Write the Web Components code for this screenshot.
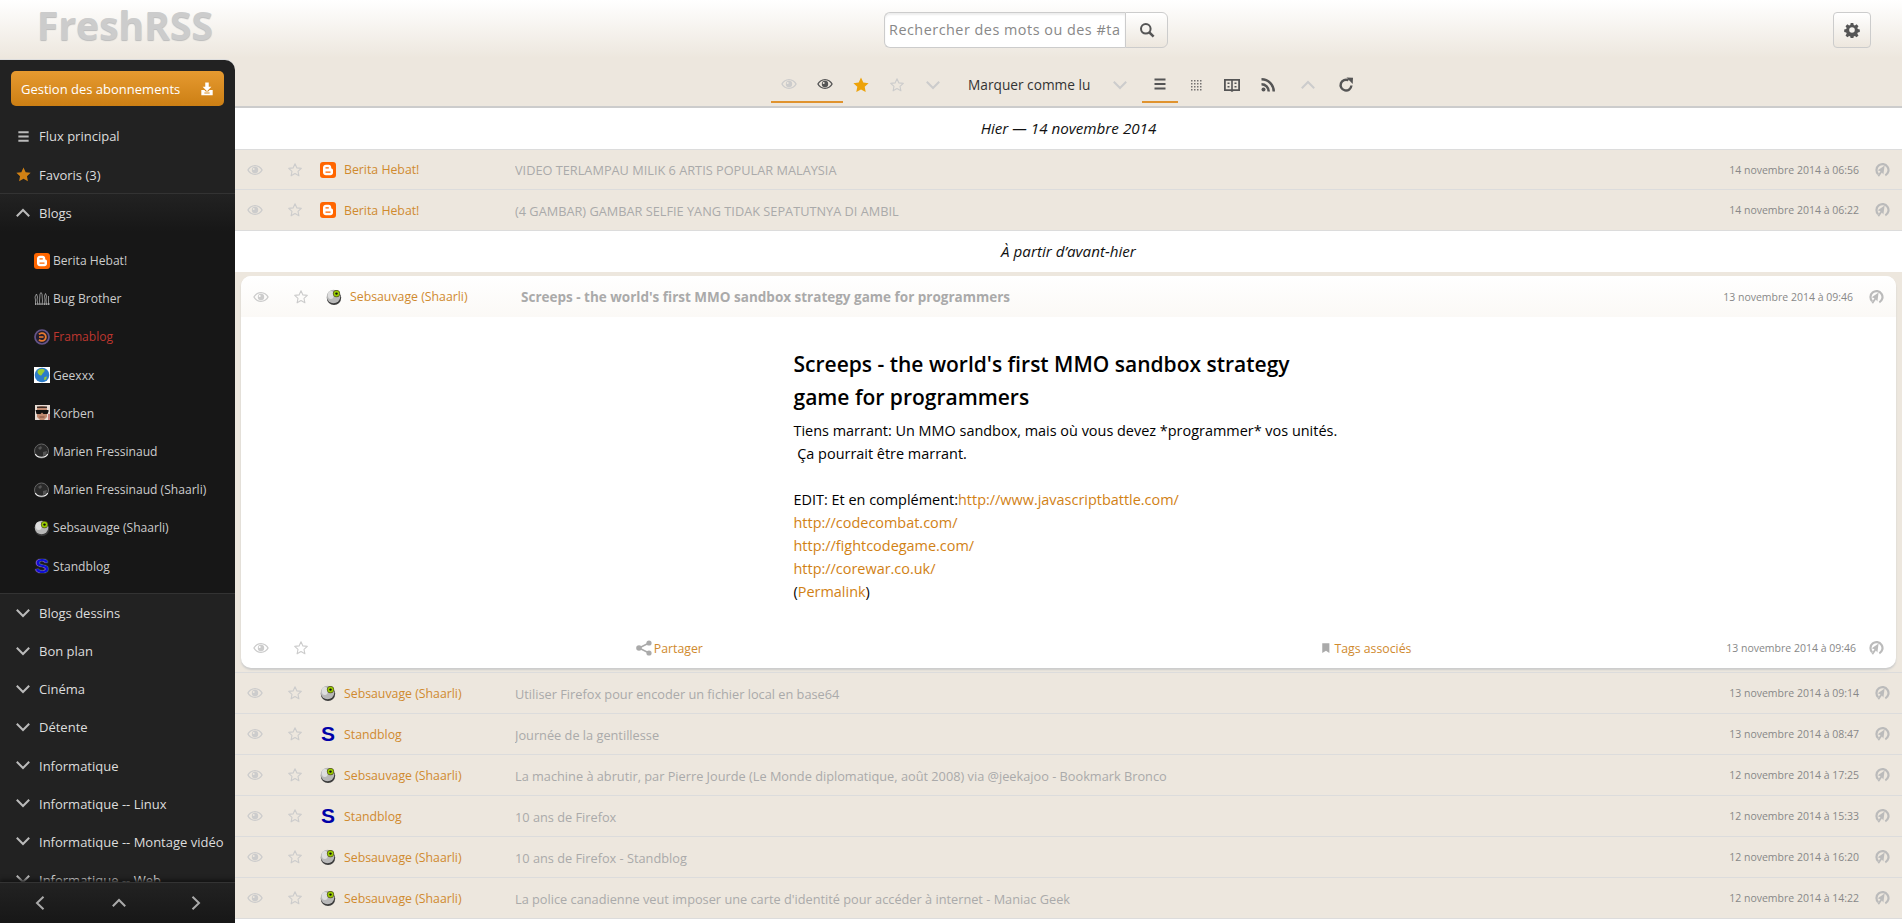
<!DOCTYPE html>
<html lang="fr">
<head>
<meta charset="utf-8">
<title>FreshRSS</title>
<style>
  html, body { margin: 0; height: 100%; overflow: hidden; }
  body { font-family: "Open Sans", "Liberation Sans", sans-serif; background: #fff; }
</style>
</head>
<body>
<fr-header></fr-header>
<fr-layout>
  <fr-sidebar slot="side">
    <fr-entry icon="list">Flux principal</fr-entry>
    <fr-entry icon="star-on">Favoris (3)</fr-entry>
    <fr-cat open>Blogs</fr-cat>
    <fr-feeds>
      <fr-feed icon="blogger">Berita Hebat!</fr-feed>
      <fr-feed icon="bug">Bug Brother</fr-feed>
      <fr-feed icon="frama" error>Framablog</fr-feed>
      <fr-feed icon="geexxx">Geexxx</fr-feed>
      <fr-feed icon="korben">Korben</fr-feed>
      <fr-feed icon="marien">Marien Fressinaud</fr-feed>
      <fr-feed icon="marien">Marien Fressinaud (Shaarli)</fr-feed>
      <fr-feed icon="seb">Sebsauvage (Shaarli)</fr-feed>
      <fr-feed icon="stand-dark">Standblog</fr-feed>
    </fr-feeds>
    <fr-cat>Blogs dessins</fr-cat>
    <fr-cat>Bon plan</fr-cat>
    <fr-cat>Cinéma</fr-cat>
    <fr-cat>Détente</fr-cat>
    <fr-cat>Informatique</fr-cat>
    <fr-cat>Informatique -- Linux</fr-cat>
    <fr-cat>Informatique -- Montage vidéo</fr-cat>
    <fr-cat>Informatique -- Web</fr-cat>
  </fr-sidebar>

  <fr-toolbar></fr-toolbar>
  <fr-date>Hier — 14 novembre 2014</fr-date>
  <fr-row first icon="blogger" feed="Berita Hebat!" date="14 novembre 2014 à 06:56">VIDEO TERLAMPAU MILIK 6 ARTIS POPULAR MALAYSIA</fr-row>
  <fr-row icon="blogger" feed="Berita Hebat!" date="14 novembre 2014 à 06:22">(4 GAMBAR) GAMBAR SELFIE YANG TIDAK SEPATUTNYA DI AMBIL</fr-row>
  <fr-date>À partir d’avant-hier</fr-date>
  <fr-card icon="seb" feed="Sebsauvage (Shaarli)" date="13 novembre 2014 à 09:46" heading="Screeps - the world's first MMO sandbox strategy game for programmers">
    Tiens marrant: Un MMO sandbox, mais où vous devez *programmer* vos unités.<br>
    &nbsp;Ça pourrait être marrant.<br>
    <br>
    EDIT: Et en complément:<a>http://www.javascriptbattle.com/</a><br>
    <a>http://codecombat.com/</a><br>
    <a>http://fightcodegame.com/</a><br>
    <a>http://corewar.co.uk/</a><br>
    (<a>Permalink</a>)
  </fr-card>
  <fr-row icon="seb" feed="Sebsauvage (Shaarli)" date="13 novembre 2014 à 09:14">Utiliser Firefox pour encoder un fichier local en base64</fr-row>
  <fr-row icon="stand" feed="Standblog" date="13 novembre 2014 à 08:47">Journée de la gentillesse</fr-row>
  <fr-row icon="seb" feed="Sebsauvage (Shaarli)" date="12 novembre 2014 à 17:25">La machine à abrutir, par Pierre Jourde (Le Monde diplomatique, août 2008) via @jeekajoo - Bookmark Bronco</fr-row>
  <fr-row icon="stand" feed="Standblog" date="12 novembre 2014 à 15:33">10 ans de Firefox</fr-row>
  <fr-row icon="seb" feed="Sebsauvage (Shaarli)" date="12 novembre 2014 à 16:20">10 ans de Firefox - Standblog</fr-row>
  <fr-row icon="seb" feed="Sebsauvage (Shaarli)" date="12 novembre 2014 à 14:22">La police canadienne veut imposer une carte d'identité pour accéder à internet - Maniac Geek</fr-row>
</fr-layout>

<script>
// all the little 16x16 icons, they take their colour from currentColor
const ICONS = {
  eye: '<path fill-rule="evenodd" d="M8 3C4.4 3 1.6 5.3.2 8c1.4 2.7 4.2 5 7.8 5s6.400-2.300 7.800-5C14.400 5.300 11.600 3 8 3zm0 1.300c2.800 0 5 1.600 6.300 3.700-1.300 2.100-3.500 3.700-6.300 3.700S3 10.100 1.700 8C3 5.900 5.200 4.300 8 4.300z"/><path fill-rule="evenodd" d="M8 4.800a3.200 3.200 0 1 0 0 6.400 3.200 3.200 0 0 0 0-6.400zM6.700 6a1 1 0 1 1 0 2 1 1 0 0 1 0-2z"/>',
  'star-on': '<path d="M8 .6l2.300 4.900 5.300.7-3.900 3.600 1 5.300L8 12.500l-4.700 2.600 1-5.300L.4 6.200l5.300-.7z"/>',
  'star-off': '<path fill="none" stroke="currentColor" stroke-width="1.100" stroke-linejoin="round" d="M8 1.800l1.900 4.100 4.400.5-3.300 3 .9 4.400L8 11.600l-3.900 2.200.9-4.400-3.300-3 4.400-.5z"/>',
  down: '<path fill="none" stroke="currentColor" stroke-width="2" d="M1.800 4.800L8 11l6.200-6.200"/>',
  up: '<path fill="none" stroke="currentColor" stroke-width="2" d="M1.800 11.200L8 5l6.200 6.200"/>',
  left: '<path fill="none" stroke="currentColor" stroke-width="2" d="M11.500 1.800L5 8l6.500 6.200"/>',
  right: '<path fill="none" stroke="currentColor" stroke-width="2" d="M4.500 1.800L11 8l-6.500 6.200"/>',
  list: '<path d="M2.500 2.500h11v2h-11zM2.500 7h11v2h-11zM2.500 11.500h11v2h-11z"/>',
  grid: '<path opacity=".8" d="M3 3h1.500v1.500H3zM6 3h1.500v1.500H6zM9 3h1.500v1.500H9zM12 3h1.500v1.500H12zM3 6h1.500v1.500H3zM6 6h1.500v1.500H6zM9 6h1.500v1.500H9zM12 6h1.500v1.500H12zM3 9h1.500v1.500H3zM6 9h1.500v1.500H6zM9 9h1.500v1.500H9zM12 9h1.500v1.500H12zM3 12h1.500v1.500H3zM6 12h1.500v1.500H6zM9 12h1.500v1.500H9zM12 12h1.500v1.500H12z"/>',
  reader: '<path fill-rule="evenodd" d="M0 2h16v12H9.500L8 15l-1.500-1H0zm1.800 1.700v8.600h5.400V3.700zm7 0v8.600h5.400V3.700z"/><path d="M3.500 5.500h2V7h-2zM3.500 9h2v1.500h-2zM10.500 5.500h2V7h-2zM10.500 9h2v1.500h-2z"/>',
  rss: '<circle cx="3.500" cy="12.500" r="2"/><path d="M1.500 6v2.500a6 6 0 0 1 6 6H10A8.500 8.500 0 0 0 1.500 6z"/><path d="M1.500 1v2.500a11 11 0 0 1 11 11H15A13.500 13.500 0 0 0 1.500 1z"/>',
  refresh: '<path fill="none" stroke="currentColor" stroke-width="2.400" d="M13.400 8.500A5.400 5.400 0 1 1 10.500 3.300"/><path d="M8.500.5l6.500.3-.3 6.200z"/>',
  search: '<path fill="none" stroke="currentColor" stroke-width="2" d="M6.800 2a4.800 4.800 0 1 0 0 9.600 4.800 4.800 0 0 0 0-9.600z"/><path fill="none" stroke="currentColor" stroke-width="2.600" d="M10.300 10.300l4.300 4.300"/>',
  gear: '<path fill-rule="evenodd" d="M6.700 1h2.600l.4 2 1.200.5 1.700-1.200 1.900 1.900-1.200 1.700.5 1.200 2 .4v2.600l-2 .4-.5 1.200 1.200 1.700-1.900 1.900-1.700-1.200-1.200.5-.4 2H6.700l-.4-2-1.200-.5-1.700 1.200-1.900-1.900 1.200-1.700-.5-1.200-2-.4V7.500l2-.4.500-1.200-1.200-1.700 1.900-1.900 1.700 1.200 1.200-.5zM8 5.200a2.800 2.800 0 1 0 0 5.600 2.800 2.800 0 0 0 0-5.600z"/>',
  share: '<circle cx="3" cy="8" r="2.800"/><circle cx="13" cy="3" r="2.600"/><circle cx="13" cy="13" r="2.600"/><path fill="none" stroke="currentColor" stroke-width="1.500" d="M3 8l10-5M3 8l10 5"/>',
  tag: '<path d="M3 1.500h9.500v13L8 11.500l-5 3z"/>',
  link: '<path fill="none" stroke="currentColor" stroke-width="2.200" d="M4.200 12.300A6 6 0 1 1 11.300 13.400"/><path d="M10.600 3.500L9.400 12.600 7.900 10.500 5 14.800 3.600 13.600l2.900-4.300-2.700-1z"/>',
  download: '<path d="M6 .5h4v5h3L8 10.500 3 5.500h3z"/><path fill-rule="evenodd" d="M1.500 9H5l1.500 1.800h3L11 9h3.500v6h-13zM5 12v1h6v-1z"/>'
};

const icon = (name, size = 16) =>
  `<svg width="${size}" height="${size}" viewBox="0 0 16 16" fill="currentColor" aria-hidden="true">${ICONS[name]}</svg>`;

// favicons of the feeds
const FAVICONS = {
  blogger: '<rect width="16" height="16" rx="3" fill="#f60"/><path fill="#fff" d="M6 2.800h2.700c1.500 0 2.500 1 2.500 2.400v1.400c1 0 1.800.6 1.800 1.600v2.500c0 1.500-1.100 2.500-2.600 2.500H6c-1.600 0-3-1.200-3-2.800V5.600c0-1.600 1.400-2.800 3-2.800z"/><path fill="#f60" d="M5.500 5.300h3.300v1.300H5.500zM5.500 9.400h5v1.300h-5z"/>',
  bug: '<path fill="none" stroke="#aaa" stroke-width=".8" d="M1.500 14V9L1 6l1.500-3L3.500 6 3 9l1 5M6 14l-.5-4L6 3l1-1.500L8 3l.5 7L8 14M10.500 14l.5-5-.5-4 1-2.500L12.500 5 12 9l.5 5M14.500 14V5"/><path fill="none" stroke="#ddd" stroke-width=".6" d="M1 13h15"/>',
  frama: '<circle cx="8" cy="8" r="7" fill="#231d2e" stroke="#645488" stroke-width="1.700"/><path fill="none" stroke="#e8792e" stroke-width="1.800" d="M5 5.400A3.900 3.900 0 1 1 5 10.600"/><path fill="#e8792e" d="M5 7.200h4.500v1.600H5z"/>',
  geexxx: '<rect width="16" height="16" fill="#fff"/><circle cx="8" cy="8" r="7.300" fill="#2c7cc8"/><path fill="#9c3" d="M5 2.500c2-1 5-.5 5.500.5s-.5 2-1.500 3-1 3-2.500 2.500S3.500 6 3.500 5 4 3 5 2.500zM10.500 10l2.500-.5-1 3-2 .5z"/>',
  korben: '<rect x="1" width="15" height="15" fill="#e8dcd4"/><path fill="#c08a70" d="M3 4c0-2 2-3 5-3s5 1 5 3v8l-3 3H6l-3-3z"/><path fill="#3a2a24" d="M3 1.500h10V3H3z"/><path fill="#111" d="M1.500 5h13v1.500l-1 2.500h-4L8 7.500 6.500 9h-4z"/><path fill="#7c4a3a" d="M5.500 11.500h5v1h-5z"/><path fill="#a02020" d="M14 9h2v6h-2z" opacity=".5"/>',
  marien: '<circle cx="7.500" cy="8" r="7" fill="#2a2a2a" stroke="#666" stroke-width="1"/><path fill="#555" d="M4 5l3-2 1 2-2 2zM9 9l4-1-1 4-3 1z"/><path fill="none" stroke="#eee" stroke-width="1.200" d="M1.300 11c2 4.300 10.400 4.300 12.400 0"/>',
  seb: '<circle cx="8" cy="8.800" r="7.200" fill="#3c3c3c"/><circle cx="7.500" cy="7.500" r="6.800" fill="#b8b8b8"/><ellipse cx="4.800" cy="6" rx="3" ry="4" fill="#dedede"/><circle cx="10.500" cy="4.600" r="3.600" fill="#55551c"/><circle cx="10.500" cy="4.600" r="2.900" fill="#9c0"/><circle cx="10.500" cy="4.600" r="1.200" fill="#111"/>',
};

class FrIcon extends HTMLElement {
  connectedCallback() {
    const size = this.getAttribute('size') || 16;
    this.attachShadow({mode: 'open'}).innerHTML = `
    <style>:host { display: inline-flex; align-items: center; justify-content: center; }</style>
    ${icon(this.getAttribute('name'), size)}`;
  }
}
customElements.define('fr-icon', FrIcon);

class FrFavicon extends HTMLElement {
  connectedCallback() {
    const name = this.getAttribute('name');
    const stand = name.indexOf('stand') === 0;
    this.attachShadow({mode: 'open'}).innerHTML = `
    <style>
      :host { display: inline-block; width: 16px; height: 16px; flex: none; position: relative; }
      svg { display: block; }
      span {
        display: block; width: 16px; text-align: center;
        font: bold 21px/16px "Liberation Sans", sans-serif; color: #0000a8;
      }
      span.dark { text-shadow: 0 0 1px #fff; color: #1010d0; }
    </style>
    ${stand
      ? `<span class="${name === 'stand-dark' ? 'dark' : ''}">S</span>`
      : `<svg width="16" height="16" viewBox="0 0 16 16" aria-hidden="true">${FAVICONS[name]}</svg>`}`;
  }
}
customElements.define('fr-favicon', FrFavicon);

class FrHeader extends HTMLElement {
  constructor() {
    super();
    this.attachShadow({mode: 'open'}).innerHTML = `
    <style>
      :host {
        display: flex; align-items: flex-start; height: 60px; box-sizing: border-box;
        padding: 12px 31px 0 0;
        background: linear-gradient(#fff 0, #ede7de 58px);
      }
      .logo {
        width: 884px; margin-top: -12px; padding-left: 37px; box-sizing: border-box;
        font-size: 39px; font-weight: 700; line-height: 50px; color: #ccc;
        text-shadow: 0 1px 1px #bbb;
      }
      .search { display: flex; height: 36px; }
      .input {
        width: 241px; box-sizing: border-box; height: 36px; padding: 0 3px 0 4px; overflow: hidden;
        border: 1px solid #ccc; border-right: 0; border-radius: 6px 0 0 6px;
        background: #fff; box-shadow: inset 0 2px 2px #eee;
        font-size: 14.4px; line-height: 34px; letter-spacing: .5px; color: #888; white-space: nowrap;
      }
      .btn {
        display: flex; align-items: center; justify-content: center; box-sizing: border-box; height: 36px;
        border: 1px solid #ccc; background: linear-gradient(#fff, #ede7de); color: #555;
      }
      .search .btn { width: 43px; border-radius: 0 6px 6px 0; }
      .gear { width: 38px; border-radius: 4px; margin-left: auto; }
    </style>
    <div class="logo">FreshRSS</div>
    <div class="search">
      <div class="input">Rechercher des mots ou des #ta</div>
      <div class="btn"><fr-icon name="search"></fr-icon></div>
    </div>
    <div class="btn gear"><fr-icon name="gear"></fr-icon></div>`;
  }
}
customElements.define('fr-header', FrHeader);

class FrLayout extends HTMLElement {
  constructor() {
    super();
    this.attachShadow({mode: 'open'}).innerHTML = `
    <style>
      :host { display: flex; height: 863px; background: #ede7de; }
      main { flex: 1; min-width: 0; overflow: hidden; background: #fff; }
    </style>
    <slot name="side"></slot>
    <main><slot></slot></main>`;
  }
}
customElements.define('fr-layout', FrLayout);

class FrSidebar extends HTMLElement {
  constructor() {
    super();
    this.attachShadow({mode: 'open'}).innerHTML = `
    <style>
      :host {
        display: flex; flex-direction: column; width: 235px; flex: none; height: 863px;
        background: #222; border-radius: 0 10px 0 0; overflow: hidden;
        box-shadow: 0 -1px 0 #ddd; color: #ccc;
      }
      .top { padding: 11px 11px 11px; }
      .manage {
        display: flex; align-items: center; justify-content: space-between; height: 35px;
        padding: 0 10px; box-sizing: border-box; border-radius: 5px;
        background: linear-gradient(#e69a30, #cc7f14); color: #fff; font-size: 13px;
      }
      .scroll { flex: 1; min-height: 0; overflow: hidden; }
      nav {
        display: flex; align-items: center; height: 41px; box-sizing: border-box; flex: none;
        border-top: 1px solid #333; box-shadow: 0 -2px 4px #111;
        background: linear-gradient(#222, #171717); color: #aaa; position: relative;
      }
      nav fr-icon { flex: 1; }
      nav fr-icon:first-child { flex: 1.03; }
    </style>
    <div class="top">
      <div class="manage">Gestion des abonnements <fr-icon name="download" size="14"></fr-icon></div>
    </div>
    <div class="scroll"><slot></slot></div>
    <nav>
      <fr-icon name="left"></fr-icon>
      <fr-icon name="up"></fr-icon>
      <fr-icon name="right"></fr-icon>
    </nav>`;
  }
}
customElements.define('fr-sidebar', FrSidebar);

class FrEntry extends HTMLElement {
  connectedCallback() {
    const name = this.getAttribute('icon');
    this.attachShadow({mode: 'open'}).innerHTML = `
    <style>
      :host {
        display: flex; align-items: center; height: 38.6px; padding-left: 15px;
        font-size: 13px; color: #ddd;
      }
      fr-icon { width: 16px; margin-right: 8px; color: ${name === 'star-on' ? '#d18114' : '#bbb'}; }
    </style>
    <fr-icon name="${name}" size="15"></fr-icon><slot></slot>`;
  }
}
customElements.define('fr-entry', FrEntry);

class FrCat extends HTMLElement {
  connectedCallback() {
    const open = this.hasAttribute('open');
    this.attachShadow({mode: 'open'}).innerHTML = `
    <style>
      :host {
        display: flex; align-items: center; height: 38.1px; padding-left: 15px; box-sizing: border-box;
        font-size: 13px; color: #ddd;
      }
      :host([open]) {
        border-top: 1px solid #333; margin-top: -1px; height: 39.25px;
        background: linear-gradient(#222, #171717);
      }
      fr-icon { width: 16px; margin-right: 8px; margin-top: -1px; color: #bbb; }
    </style>
    <fr-icon name="${open ? 'up' : 'down'}" size="16"></fr-icon><slot></slot>`;
  }
}
customElements.define('fr-cat', FrCat);

class FrFeeds extends HTMLElement {
  constructor() {
    super();
    this.attachShadow({mode: 'open'}).innerHTML = `
    <style>
      :host {
        display: block; padding: 9px 0 8px; background: #171717;
        border-bottom: 1px solid #333;
      }
    </style>
    <slot></slot>`;
  }
}
customElements.define('fr-feeds', FrFeeds);

class FrFeed extends HTMLElement {
  connectedCallback() {
    this.attachShadow({mode: 'open'}).innerHTML = `
    <style>
      :host {
        display: flex; align-items: center; height: 38.2px; padding-left: 34px;
        font-size: 12.1px; color: #ccc;
      }
      :host([error]) { color: #bd362f; }
      fr-favicon { margin-right: 3px; }
    </style>
    <fr-favicon name="${this.getAttribute('icon')}"></fr-favicon><slot></slot>`;
  }
}
customElements.define('fr-feed', FrFeed);

class FrToolbar extends HTMLElement {
  constructor() {
    super();
    const b = (name, cls = '', size = 16) => `<div class="b ${cls}"><fr-icon name="${name}" size="${size}"></fr-icon></div>`;
    this.attachShadow({mode: 'open'}).innerHTML = `
    <style>
      :host {
        display: flex; height: 48px; box-sizing: border-box; padding-left: 536px;
        background: #ede7de; border-bottom: 2px solid #ccc; color: #ccc;
      }
      .b {
        display: flex; align-items: center; justify-content: center; width: 36px; height: 43px;
        padding-top: 6px; box-sizing: border-box;
      }
      .on { border-bottom: 2px solid #e0932e; padding-top: 7px; }
      .dark { color: #555; }
      .star { color: #eda30a; }
      .mark { font-size: 13.7px; color: #333; width: 151px; padding: 5px 0 0 17px; line-height: 40px; height: 43px; box-sizing: border-box; white-space: nowrap; }
      .sp2 { margin-left: 2px; }
      .sp4 { margin-left: 4px; }
    </style>
    ${b('eye', 'on')}${b('eye', 'on dark')}${b('star-on', 'star')}${b('star-off')}${b('down')}
    <div class="mark">Marquer comme lu</div>
    ${b('down')}${b('list', 'on dark sp4')}${b('grid', 'dark')}${b('reader', 'dark')}${b('rss', 'dark')}
    ${b('up', 'sp4')}${b('refresh', 'dark sp2')}`;
  }
}
customElements.define('fr-toolbar', FrToolbar);

class FrDate extends HTMLElement {
  constructor() {
    super();
    this.attachShadow({mode: 'open'}).innerHTML = `
    <style>
      :host {
        display: block; height: 41px; line-height: 41px; text-align: center;
        font-size: 15.2px; font-style: italic; color: #111; background: #fff;
      }
    </style>
    <slot></slot>`;
  }
}
customElements.define('fr-date', FrDate);

// the line of a flux: eye, star, favicon + feed name, title, date, link
class FrRow extends HTMLElement {
  connectedCallback() {
    const a = n => this.getAttribute(n) || '';
    this.attachShadow({mode: 'open'}).innerHTML = `
    <style>
      :host {
        display: flex; align-items: center; height: 41px; box-sizing: border-box;
        background: #ede7de; border-bottom: 1px solid #dcdcdc; white-space: nowrap;
      }
      :host([first]) { border-top: 1px solid #dcdcdc; }
      :host([open]) { background: linear-gradient(#fff, #fbf9f6); border-bottom: 0; border-radius: 10px 10px 0 0; }
      fr-icon { width: 40px; flex: none; color: #ccc; }
      .feed { display: flex; align-items: center; width: 200px; flex: none; padding-left: 5px; box-sizing: border-box; font-size: 12.3px; color: #d08a2e; }
      .feed span { margin-left: 8px; }
      .title { flex: 1; min-width: 0; font-size: 12.75px; color: #aaa; padding-top: 1px; overflow: hidden; }
      :host([open]) .title { font-weight: 700; font-size: 13.5px; }
      .date { font-size: 10.5px; color: #888; padding-right: 3px; }
      .ln { color: #bbb; }
    </style>
    <fr-icon name="eye"></fr-icon><fr-icon name="star-off"></fr-icon>
    <div class="feed"><fr-favicon name="${a('icon')}"></fr-favicon><span>${a('feed')}</span></div>
    <div class="title"><slot></slot></div>
    <div class="date">${a('date')}</div>
    <fr-icon class="ln" name="link"></fr-icon>`;
  }
}
customElements.define('fr-row', FrRow);

// an opened article
class FrCard extends HTMLElement {
  connectedCallback() {
    const a = n => this.getAttribute(n) || '';
    this.attachShadow({mode: 'open'}).innerHTML = `
    <style>
      :host { display: block; background: #ede7de; padding: 4px 6px 4px; border-bottom: 1px solid #dcdcdc; }
      .card { background: #fff; border-radius: 10px; box-shadow: 0 2px 2px #ccc; }
      article { width: 550px; margin: 0 auto; padding: 31px 0 25px; font-size: 14.45px; line-height: 23px; color: #000; }
      h1 { margin: 0 0 5px; font-size: 21px; line-height: 33px; font-weight: 600; color: #000; }
      ::slotted(a) { color: #d18114; }
      footer { display: flex; align-items: center; height: 40px; white-space: nowrap; }
      footer > fr-icon { width: 40px; flex: none; color: #ccc; }
      footer > fr-icon.ln { color: #bbb; }
      .cell { flex: 1; display: flex; align-items: center; justify-content: center; gap: 2px; font-size: 12.3px; color: #d08a2e; }
      .cell fr-icon { color: #aaa; }
      .date { font-size: 10.5px; color: #888; padding-left: 12px; }
    </style>
    <div class="card">
      <fr-row open icon="${a('icon')}" feed="${a('feed')}" date="${a('date')}">${a('heading')}</fr-row>
      <article>
        <h1>${a('heading')}</h1>
        <slot></slot>
      </article>
      <footer>
        <fr-icon name="eye"></fr-icon><fr-icon name="star-off"></fr-icon>
        <div class="cell"><fr-icon name="share"></fr-icon>Partager</div>
        <div class="cell"><fr-icon name="tag" size="12"></fr-icon>Tags associés</div>
        <div class="date">${a('date')}</div>
        <fr-icon class="ln" name="link"></fr-icon>
      </footer>
    </div>`;
  }
}
customElements.define('fr-card', FrCard);
</script>
</body>
</html>
